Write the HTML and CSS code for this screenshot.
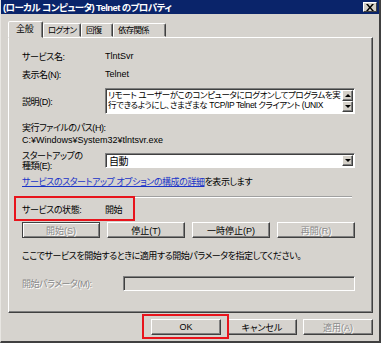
FILE: index.html
```html
<!DOCTYPE html>
<html lang="ja">
<head>
  <meta charset="UTF-8">
  <title>Telnet のプロパティ</title>
  <link rel="stylesheet" href="styles.css">
</head>
<body>
  <div class="window">
    <div class="titlebar">
      <span class="title">(ローカル コンピュータ) Telnet のプロパティ</span>
      <span class="close">
        <svg width="8" height="7" viewBox="0 0 8 7"><path d="M0 0h2l2 2.5 2-2.5h2L5 3.5 8 7H6L4 4.5 2 7H0l3-3.5z" fill="#000"/></svg>
      </span>
    </div>

    <div class="content">
      <div class="tabs">
        <div class="tab active">全般</div>
        <div class="tab">ログオン</div>
        <div class="tab">回復</div>
        <div class="tab">依存関係</div>
      </div>

      <div class="panel">
        <div class="row">
          <span class="label">サービス名:</span>
          <span class="value latin">TlntSvr</span>
        </div>
        <div class="row row-name">
          <span class="label">表示名(N):</span>
          <span class="value latin">Telnet</span>
        </div>
        <div class="row row-desc">
          <span class="label">説明(D):</span>
          <div class="textbox">
            <div class="textbox-text">リモート ユーザーがこのコンピュータにログオンしてプログラムを実行できるようにし、さまざまな TCP/IP Telnet クライアント (UNIX</div>
            <div class="scrollbar">
              <span class="arrow up"></span>
              <span class="arrow down"></span>
            </div>
          </div>
        </div>
        <div class="line line-path">実行ファイルのパス(H):</div>
        <div class="line line-file latin">C:¥Windows¥System32¥tlntsvr.exe</div>
        <div class="row row-startup">
          <span class="label label-two">スタートアップの<br>種類(E):</span>
          <div class="select">
            <span class="select-text">自動</span>
            <span class="arrow down drop"></span>
          </div>
        </div>
        <div class="line line-link"><a href="#">サービスのスタートアップ オプションの構成の詳細</a>を表示します</div>
        <div class="separator"></div>
        <div class="status">
          <span class="label">サービスの状態:</span>
          <span class="value">開始</span>
        </div>
        <div class="actions">
          <button class="btn default" disabled>開始(S)</button>
          <button class="btn">停止(T)</button>
          <button class="btn">一時停止(P)</button>
          <button class="btn" disabled>再開(R)</button>
        </div>
        <div class="line line-hint">ここでサービスを開始するときに適用する開始パラメータを指定してください。</div>
        <div class="row row-param">
          <span class="label disabled">開始パラメータ(M):</span>
          <div class="input"></div>
        </div>
      </div>

      <div class="footer">
        <button class="btn btn-footer marked">OK</button>
        <button class="btn btn-footer">キャンセル</button>
        <button class="btn btn-footer" disabled>適用(A)</button>
      </div>
    </div>
  </div>
</body>
</html>
```

FILE: styles.css
```css
* {
  box-sizing: border-box;
}
body {
  margin: 0;
  font-family: "Liberation Sans", "Noto Sans CJK JP", sans-serif;
  font-size: 9px;
  letter-spacing: -0.45px;
  font-feature-settings: "palt";
  color: #000;
  background: #d4d0c8;
}
.latin {
  letter-spacing: 0;
}
.window {
  width: 381px;
  height: 343px;
  background: #d6d3ce;
  border-left: 1px solid #e8e6e2;
  border-right: 2px solid #404040;
  border-bottom: 2px solid #404040;
  overflow: hidden;
}
.titlebar {
  height: 14px;
  background: #0a246a;
  display: flex;
  align-items: center;
  justify-content: space-between;
  padding: 0 2px 0 2px;
}
.title {
  color: #fff;
  font-weight: 700;
  font-size: 9.5px;
  letter-spacing: -0.6px;
  white-space: nowrap;
}
.close {
  width: 14px;
  height: 10px;
  background: #d4d0c8;
  border: 1px solid;
  border-color: #fff #404040 #404040 #fff;
  display: flex;
  align-items: center;
  justify-content: center;
}
.content {
  padding: 7px 6px 0 7px;
}

/* tabs */
.tabs {
  display: flex;
  align-items: flex-end;
  height: 16px;
}
.tab {
  height: 14px;
  line-height: 13px;
  padding: 0 0 0 4px;
  font-size: 8.5px;
  letter-spacing: -0.8px;
  white-space: nowrap;
  overflow: hidden;
  border: 1px solid;
  border-color: #fff #404040 transparent #fff;
  border-radius: 2px 2px 0 0;
  box-shadow: inset -1px 0 #808080;
}
.tab.active {
  height: 17px;
  line-height: 15px;
  width: 35px;
  padding: 0 0 0 7px;
  font-size: 9px;
  letter-spacing: -0.3px;
  margin-bottom: -1px;
  background: #d6d3ce;
  position: relative;
  z-index: 1;
}
.tab:nth-child(2) { width: 38px; }
.tab:nth-child(3) { width: 32px; }
.tab:nth-child(4) { width: 53px; }

/* panel */
.panel {
  height: 276px;
  border: 1px solid;
  border-color: #fff #404040 #404040 #fff;
  box-shadow: inset -1px -1px #808080;
  padding: 12px 0 0 13px;
}
.row {
  display: flex;
  align-items: center;
  height: 12px;
}
.label {
  width: 83px;
  flex: none;
  white-space: nowrap;
}
.label.disabled {
  width: 101px;
  color: #8a8a8a;
  text-shadow: 1px 1px #fff;
}
.row-name {
  margin-top: 6px;
}
.row-desc {
  margin-top: 8px;
  height: 26px;
}
.textbox {
  width: 250px;
  height: 26px;
  background: #fff;
  border: 1px solid;
  border-color: #808080 #fff #fff #808080;
  box-shadow: inset 1px 1px #404040;
  display: flex;
  padding: 1px 1px 1px 2px;
}
.textbox-text {
  flex: 1;
  font-size: 8.5px;
  letter-spacing: -0.4px;
  line-height: 9.5px;
  height: 21px;
  overflow: hidden;
  padding-top: 1px;
}
.scrollbar {
  width: 11px;
  display: flex;
  flex-direction: column;
  justify-content: space-between;
}
.arrow {
  width: 11px;
  height: 11px;
  background: #d4d0c8;
  border: 1px solid;
  border-color: #fff #404040 #404040 #fff;
  box-shadow: inset -1px -1px #808080;
  display: flex;
  align-items: center;
  justify-content: center;
}
.arrow::after {
  content: "";
  border-left: 3px solid transparent;
  border-right: 3px solid transparent;
}
.arrow.up::after {
  border-bottom: 3px solid #000;
}
.arrow.down::after {
  border-top: 3px solid #000;
}
.line {
  height: 12px;
  line-height: 12px;
  white-space: nowrap;
}
.line-path {
  margin-top: 8px;
}
.row-startup {
  margin-top: 5px;
  height: 20px;
  align-items: flex-start;
}
.label-two {
  line-height: 9.5px;
  padding-top: 1px;
}
.select {
  width: 250px;
  height: 15px;
  margin-top: 2px;
  background: #fff;
  border: 1px solid;
  border-color: #808080 #fff #fff #808080;
  box-shadow: inset 1px 1px #404040;
  display: flex;
  justify-content: space-between;
  align-items: center;
  padding: 1px 1px 1px 3px;
}
.select-text {
  font-size: 10px;
}
.drop {
  height: 11px;
}
.line-link {
  margin-top: 5px;
}
.line-link a {
  color: #1a33c8;
}
.separator {
  margin: 8px 0 0 -7px;
  width: 337px;
  height: 2px;
  border-top: 1px solid #a0a0a0;
  border-bottom: 1px solid #fff;
}
.status {
  margin: -2px 0 0 -8px;
  width: 121px;
  height: 25px;
  border: 2px solid #e8141c;
  padding: 2px 0 0 6px;
  display: flex;
  align-items: center;
}
.status .label {
  width: 83px;
}
.actions {
  margin-top: 1px;
  width: 333px;
  display: flex;
  justify-content: space-between;
}
.btn {
  font: inherit;
  font-size: 9px;
  color: #000;
  width: 78px;
  height: 16px;
  padding: 0;
  background: #d6d3ce;
  border: 1px solid;
  border-color: #fff #404040 #404040 #fff;
  box-shadow: inset -1px -1px #808080;
}
.btn:disabled {
  color: #8a8a8a;
  text-shadow: 1px 1px #fff;
}
.btn.default {
  border-color: #404040;
  box-shadow: inset 1px 1px #fff, inset -1px -1px #808080;
}
.line-hint {
  margin-top: 12px;
}
.row-param {
  margin-top: 14px;
  height: 15px;
}
.input {
  width: 232px;
  height: 15px;
  border: 1px solid;
  border-color: #808080 #fff #fff #808080;
  box-shadow: inset 1px 1px #404040;
}

/* footer */
.footer {
  display: flex;
  justify-content: flex-end;
  gap: 6px;
  margin-top: 6px;
}
.btn-footer {
  width: 70px;
}
.marked {
  position: relative;
}
.marked::after {
  content: "";
  position: absolute;
  top: -6px;
  left: -10px;
  right: -9px;
  bottom: -5px;
  border: 2px solid #e8141c;
}
```
